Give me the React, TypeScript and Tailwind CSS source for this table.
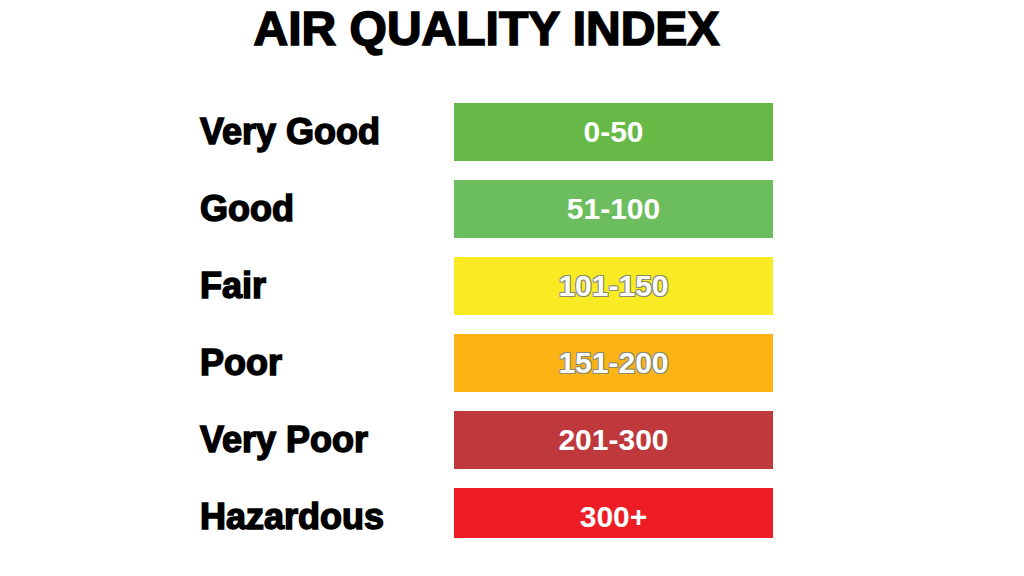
import React from "react";

type Row = { label: string; range: string; bg: string; outline?: boolean; last?: boolean };

const rows: Row[] = [
  { label: "Very Good", range: "0-50", bg: "bg-[#66b946]" },
  { label: "Good", range: "51-100", bg: "bg-[#6bbd5d]" },
  { label: "Fair", range: "101-150", bg: "bg-[#f8eb24]", outline: true },
  { label: "Poor", range: "151-200", bg: "bg-[#fcb316]", outline: true },
  { label: "Very Poor", range: "201-300", bg: "bg-[#bf393c]" },
  { label: "Hazardous", range: "300+", bg: "bg-[#ed1c25]", last: true },
];

export default function App() {
  return (
    <div className="w-[1024px] h-[576px] bg-white overflow-hidden font-['Liberation_Sans',Arial,sans-serif]">
      <div className="pl-[200px] pt-[5px] w-[773px]">
        <div className="w-[573px] text-center text-[48px] leading-[48px] font-bold text-black [-webkit-text-stroke:1.6px_#000]">
          AIR QUALITY INDEX
        </div>
        <div className="mt-[50px] flex flex-col gap-[19px]">
          {rows.map((r) => (
            <div key={r.label} className={`flex items-center ${r.last ? "h-[50px]" : "h-[58px]"}`}>
              <div
                className={`w-[254px] text-[36px] font-bold text-black leading-none [-webkit-text-stroke:1.5px_#000] ${
                  r.last ? "pt-[8px]" : ""
                }`}
              >
                {r.label}
              </div>
              <div
                className={`w-[319px] h-full ${r.bg} flex items-center justify-center text-white text-[30px] font-bold leading-none ${
                  r.last ? "pt-[8px]" : ""
                } ${
                  r.outline
                    ? "[text-shadow:1px_1px_0_#8a8a70,-1px_-1px_0_#8a8a70,1px_-1px_0_#8a8a70,-1px_1px_0_#8a8a70]"
                    : ""
                }`}
              >
                {r.range}
              </div>
            </div>
          ))}
        </div>
      </div>
    </div>
  );
}
